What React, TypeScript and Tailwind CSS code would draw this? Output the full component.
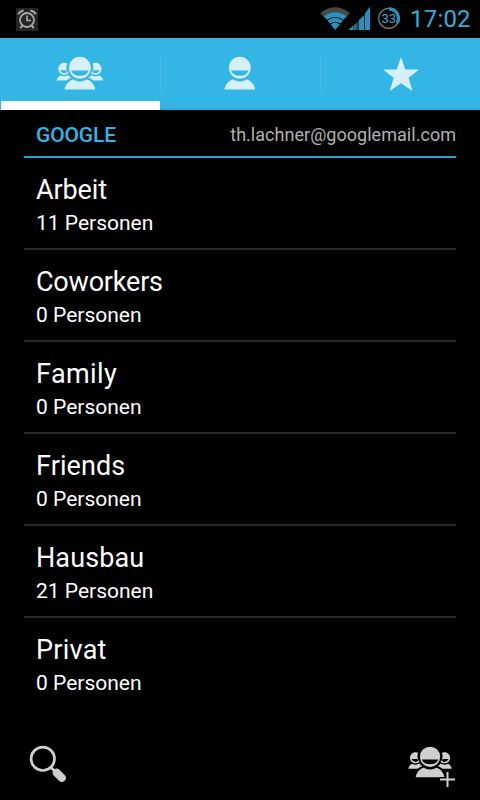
import React from "react";

const groups = [
  { name: "Arbeit", count: "11 Personen", spacing: "tracking-[-0.1px]" },
  { name: "Coworkers", count: "0 Personen", spacing: "tracking-[-0.2px]" },
  { name: "Family", count: "0 Personen", spacing: "tracking-[0.4px]" },
  { name: "Friends", count: "0 Personen", spacing: "tracking-[0.1px]" },
  { name: "Hausbau", count: "21 Personen", spacing: "tracking-[0.1px]" },
  { name: "Privat", count: "0 Personen", spacing: "tracking-[0.25px]" },
];

// One contact: round head with a smile and rounded shoulders, 32x34.
function PersonShape() {
  return (
    <>
      <path
        fillRule="evenodd"
        d="M16 0.8a10.9 10.9 0 1 1 0 21.8a10.9 10.9 0 0 1 0-21.8zM7.3 14.5a8.9 6.6 0 0 0 17.4 0z"
      />
      <path d="M0.6 33.6C1.2 29.5 4.2 25.4 8 23.8C9.2 23.3 10 23.7 11 24.2C14 25.8 18 25.8 21 24.2C22 23.7 22.8 23.3 24 23.8C27.8 25.4 30.8 29.5 31.4 33.6z" />
    </>
  );
}

function SideShape() {
  return (
    <>
      <path
        fillRule="evenodd"
        d="M10.8 7.4C6.2 5.3 1.9 8.6 1.9 12.7C1.9 16.6 5 19 8.4 18.7C9.6 18.6 10.8 18.1 12.2 17.2C9.8 14.2 9.4 10.4 10.8 7.4zM3.7 14.2H10L10.8 16.3C8.4 18 4.9 17.2 3.7 14.2z"
      />
      <path d="M0.2 24.6C0.6 22.2 2 20.3 4.2 19.3C6.5 20.6 9.6 20.6 12 19C13 20.4 14 21.1 15.4 21.6C13.4 22.3 11.6 23.2 10.2 24.6z" />
    </>
  );
}

function GroupShape() {
  return (
    <>
      <SideShape />
      <g transform="translate(47 0) scale(-1 1)">
        <SideShape />
      </g>
      <g transform="translate(7.5 0)">
        <PersonShape />
      </g>
    </>
  );
}

function StatusBar() {
  return (
    <header className="flex h-[38px] items-center">
      <svg className="ml-4 h-[23px] w-[22px]" viewBox="0 0 22 23" fill="none">
        <rect width="22" height="23" rx="1" fill="#252525" />
        <g stroke="#a8a8a8" strokeWidth="1.8">
          <circle cx="11" cy="12" r="7" />
          <path d="M11 7.5v5h4" strokeWidth="1.6" />
          <path d="M2.2 6.2Q4 3 7.6 2.4M19.8 6.2Q18 3 14.4 2.4" strokeWidth="2" />
          <path d="M6.3 17.5l-2 2.6M15.7 17.5l2 2.6" strokeWidth="2" />
        </g>
      </svg>
      <svg className="ml-[282px] h-[38px] w-[82px]" viewBox="320 0 82 38">
        <path d="M320.2 13Q335 1.5 350 13L346.5 16.8Q335 8.8 323.5 16.8z" fill="#484848" />
        <g fill="#2a91bd">
          <path d="M323.8 16.4Q335 8.2 346.6 16.4L343.5 19.8Q335 14 326.8 19.8z" />
          <path d="M327.4 20.6Q335 14.9 343 20.6L340.5 23.5Q335 19.8 330 23.5z" />
          <path d="M330.7 24.4Q335 20.7 339.8 24.4L335.2 30z" />
          <path d="M348.5 30L353.6 25.2V30zM358.6 20.6L364 15.2V30H358.6zM364.8 13.8L370 6.8V30H364.8z" />
        </g>
        <path d="M354.4 24.8L357.8 21.7V30H354.4z" fill="#505050" />
        <path d="M354.8 25V30" stroke="#2a91bd" strokeWidth="1.2" />
        <circle cx="388.7" cy="18.4" r="10" fill="none" stroke="#777" strokeWidth="1.3" />
        <path d="M388.7 8.9A9.5 9.5 0 0 1 397.2 23" fill="none" stroke="#2a91bd" strokeWidth="3.4" />
        <text x="388.7" y="23" textAnchor="middle" fontSize="13" fill="#2fa6d3" fontFamily="Roboto, sans-serif">33</text>
      </svg>
      <span className="ml-2 text-[24px] leading-[38px] tracking-[0.2px] text-[#31addb]">17:02</span>
    </header>
  );
}

function Tabs() {
  return (
    <nav className="grid h-[72px] grid-cols-3 border-b-2 border-[#30aad8] bg-[#33b5e5] text-[#d6f0fa]">
      <div className="flex h-[72px] flex-col">
        <div className="flex h-[63px] justify-center">
          <svg className="mt-[18px] h-[34px] w-[48px]" viewBox="-0.4 0 48 34" fill="currentColor">
            <GroupShape />
          </svg>
        </div>
        <div className="ml-px h-[9px] bg-white" />
      </div>
      <div className="flex">
        <div className="mt-[18px] h-9 w-px bg-[#4bb9e2]" />
        <svg className="mt-[18px] ml-[63px] h-[34px] w-8" viewBox="0.2 0 32 34" fill="currentColor">
          <PersonShape />
        </svg>
      </div>
      <div className="flex">
        <div className="mt-[18px] h-9 w-px bg-[#4bb9e2]" />
        <svg className="mt-[18px] ml-[61px] h-[36px] w-[38px]" viewBox="382 56 38 36" fill="currentColor">
          <path d="M401 57L405.3 69.4H419L408.6 77.7L412.4 91L401 83.3L389.8 91L393.6 77.7L383 69.4H396.8z" />
        </svg>
      </div>
    </nav>
  );
}

export default function App() {
  return (
    <div className="flex h-[800px] w-[480px] flex-col overflow-hidden bg-black font-[Roboto,sans-serif] text-white">
      <StatusBar />
      <Tabs />
      <main className="mx-6 flex-1">
        <div className="flex h-12 items-center justify-between border-b-2 border-[#2ba0cb] pl-3 text-[#33b5e5]">
          <h2 className="mt-1 text-[21px] leading-6 font-medium tracking-[-0.15px]">GOOGLE</h2>
          <span className="mt-1 text-[18px] leading-6 tracking-[0.03px] text-[#b0b0b0]">th.lachner@googlemail.com</span>
        </div>
        <ul>
          {groups.map((g) => (
            <li key={g.name} className="h-[92px] border-b-2 border-[#282828] pt-4 pl-3 last:border-transparent">
              <div className={`text-[27px] leading-8 ${g.spacing}`}>{g.name}</div>
              <div className="mt-[5px] text-[21px] leading-6">{g.count}</div>
            </li>
          ))}
        </ul>
      </main>
      <footer className="flex h-[72px] justify-between pr-6 pl-[29px]">
        <svg className="mt-[17px] h-[38px] w-[38px]" viewBox="29 745 38 38" fill="none" stroke="#cfcfcf">
          <circle cx="42.8" cy="758.8" r="11.7" strokeWidth="2.7" />
          <path d="M51 767.5L55 771.5" strokeWidth="2.6" />
          <path d="M56.8 772.8L61.8 777.8" strokeWidth="8" strokeLinecap="round" />
        </svg>
        <svg className="mt-[17px] h-[44px] w-[48px]" viewBox="408 745 48 44">
          <g transform="translate(408.2 745.9) scale(0.93)" fill="#cfcfcf">
            <GroupShape />
          </g>
          <path d="M447.5 772V787M440 779.5H455" stroke="#000" strokeWidth="5" />
          <path d="M447.5 772V787M440 779.5H455" stroke="#cfcfcf" strokeWidth="2" />
        </svg>
      </footer>
    </div>
  );
}
